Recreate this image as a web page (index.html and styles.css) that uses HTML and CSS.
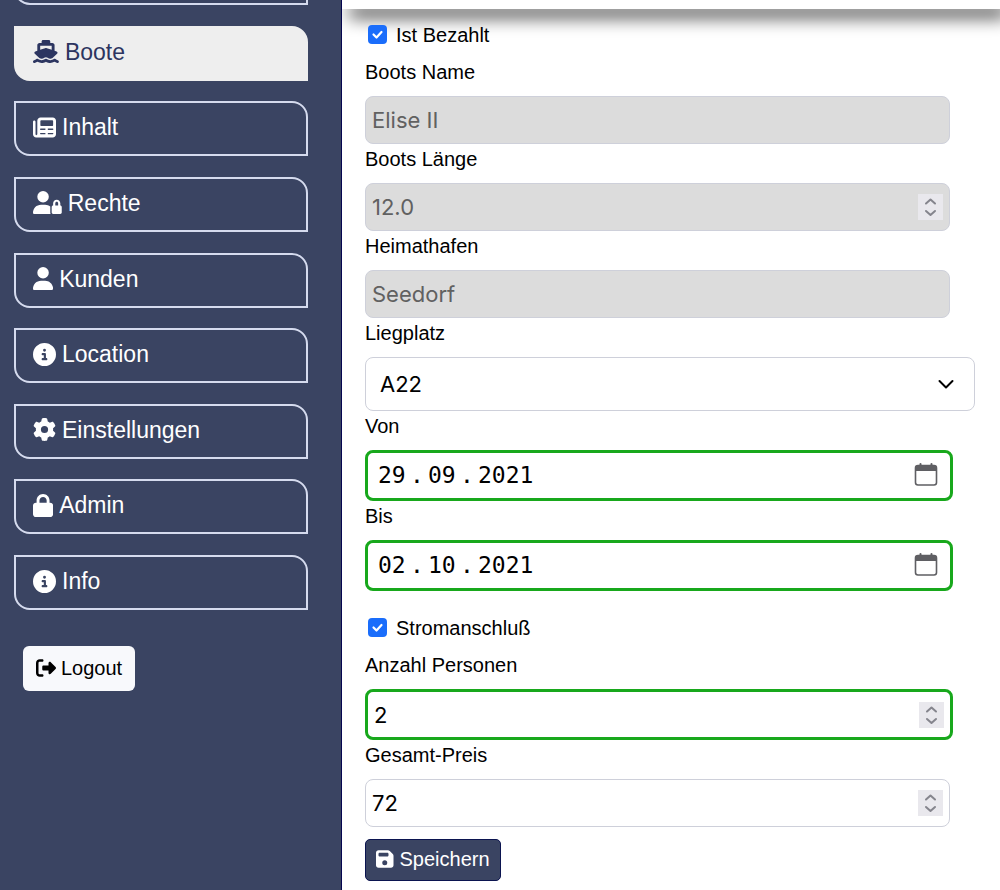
FILE: index.html
```html
<!DOCTYPE html>
<html lang="de">
<head>
<meta charset="utf-8">
<meta name="viewport" content="width=device-width, initial-scale=1">
<title>Boote</title>
<link rel="stylesheet" href="styles.css">
</head>
<body>
<svg class="sprite" aria-hidden="true">
  <symbol id="info" viewBox="0 0 512 512"><path d="M256 512A256 256 0 1 0 256 0a256 256 0 1 0 0 512zM216 336h24V272H216c-13.300 0-24-10.700-24-24s10.700-24 24-24h48c13.300 0 24 10.700 24 24v88h8c13.300 0 24 10.700 24 24s-10.700 24-24 24H216c-13.300 0-24-10.700-24-24s10.700-24 24-24zm40-208a32 32 0 1 1 0 64 32 32 0 1 1 0-64z"/></symbol>
  <symbol id="calendar" viewBox="0 0 24 24"><path d="M6.500 1v4M17.500 1v4" fill="none" stroke="currentColor" stroke-width="2" stroke-linecap="round"/><rect x="1.500" y="2.500" width="21" height="19.500" rx="2.500" fill="none" stroke="currentColor" stroke-width="1.600"/><path d="M1.500 8V5a2.500 2.500 0 0 1 2.500-2.500h16a2.500 2.500 0 0 1 2.500 2.500v3z"/></symbol>
  <symbol id="up" viewBox="0 0 25 13"><path d="M8 9.500l4.500-4L17 9.500" fill="none" stroke="currentColor" stroke-width="2" stroke-linecap="round" stroke-linejoin="round"/></symbol>
  <symbol id="down" viewBox="0 0 25 13"><path d="M8 4l4.500 4L17 4" fill="none" stroke="currentColor" stroke-width="2" stroke-linecap="round" stroke-linejoin="round"/></symbol>
</svg>
<div class="layout">
  <aside class="sidebar">
    <nav class="menu">
      <a class="menu-item" href="#start" aria-label="Start"></a>
      <a class="menu-item active" href="#boote" aria-current="page"><svg class="icon" viewBox="0 0 576 512"><path d="M192 32c0-17.700 14.300-32 32-32H352c17.700 0 32 14.300 32 32V64h48c26.500 0 48 21.500 48 48V240l44.400 14.800c23.100 7.700 29.500 37.500 11.500 53.900l-101 92.600c-16.200 9.400-34.700 15.100-50.900 15.100c-19.600 0-40.800-7.700-59.200-20.300c-22.100-15.500-51.600-15.500-73.700 0c-17.100 11.800-38 20.300-59.200 20.300c-16.200 0-34.700-5.700-50.900-15.100l-101-92.600c-18-16.500-11.600-46.200 11.500-53.900L96 240V112c0-26.500 21.500-48 48-48h48V32zM160 218.700l107.800-35.900c13.100-4.400 27.300-4.400 40.500 0L416 218.700V128H160v90.700zM306.500 421.900C329 437.400 356.500 448 384 448c26.900 0 55.400-10.800 77.400-26.100c11.900-8.500 28.100-7.800 39.200 1.700c14.400 11.900 32.500 21 50.600 25.200c17.200 4 27.900 21.200 23.900 38.400s-21.200 27.900-38.400 23.900c-24.500-5.700-44.900-16.500-58.200-25C449.500 501.700 417 512 384 512c-31.900 0-60.600-9.900-80.400-18.900c-5.800-2.700-11.100-5.300-15.600-7.700c-4.500 2.400-9.700 5.100-15.600 7.700c-19.800 9-48.500 18.900-80.400 18.900c-33 0-65.500-10.300-94.500-25.800c-13.400 8.400-33.700 19.300-58.200 25c-17.200 4-34.400-6.700-38.400-23.900s6.700-34.400 23.900-38.400c18.100-4.200 36.200-13.300 50.600-25.200c11.100-9.400 27.300-10.100 39.200-1.700C136.700 437.200 165.100 448 192 448c27.500 0 55-10.600 77.500-26.100c11.100-7.900 25.900-7.900 37 0z"/></svg>Boote</a>
      <a class="menu-item" href="#inhalt"><svg class="icon" viewBox="0 0 512 512"><path fill-rule="evenodd" d="M168 32H440c40 0 72 32 72 72V408c0 40-32 72-72 72H72c-40 0-72-32-72-72V128c0-17 12-30 28-30s28 13 28 30V408c0 11 7 18 16 18s24-7 24-24V104c0-40 32-72 72-72zM182 94c-10 0-18 8-18 18v94c0 8 6 14 14 14H434c8 0 14-6 14-14V112c0-10-8-18-18-18zM170 280c-8 0-14 6-14 14s6 16 14 16H276v-30zM330 280v30H440c8 0 14-8 14-16s-6-14-14-14zM170 378c-8 0-14 6-14 14s6 16 14 16H276v-30zM330 378v30H440c8 0 14-8 14-16s-6-14-14-14z"/></svg>Inhalt</a>
      <a class="menu-item" href="#rechte"><svg class="icon" viewBox="0 0 640 512"><path d="M224 256A128 128 0 1 0 224 0a128 128 0 1 0 0 256zm-45.700 48C79.800 304 0 383.800 0 482.300C0 498.700 13.300 512 29.700 512H392.600c-5.400-9.400-8.600-20.300-8.600-32V352c0-2.100 .1-4.200 .3-6.300c-31-26-71-41.700-114.600-41.700H178.300zM528 240c17.700 0 32 14.300 32 32v48H496V272c0-17.700 14.300-32 32-32zm-80 32v48c-17.700 0-32 14.300-32 32V480c0 17.700 14.300 32 32 32H608c17.700 0 32-14.300 32-32V352c0-17.700-14.300-32-32-32V272c0-44.200-35.800-80-80-80s-80 35.800-80 80z"/></svg>Rechte</a>
      <a class="menu-item" href="#kunden"><svg class="icon" viewBox="0 0 448 512"><path d="M224 256A128 128 0 1 0 224 0a128 128 0 1 0 0 256zm-45.700 48C79.800 304 0 383.800 0 482.300C0 498.700 13.300 512 29.700 512H418.300c16.400 0 29.700-13.300 29.700-29.700C448 383.800 368.200 304 269.700 304H178.300z"/></svg>Kunden</a>
      <a class="menu-item" href="#location"><svg class="icon" viewBox="0 0 512 512"><use href="#info"/></svg>Location</a>
      <a class="menu-item" href="#einstellungen"><svg class="icon" viewBox="0 0 512 512"><path d="M495.900 166.600c3.200 8.700 .5 18.400-6.400 24.600l-43.300 39.400c1.100 8.300 1.700 16.800 1.700 25.400s-.6 17.100-1.700 25.400l43.300 39.400c6.900 6.200 9.600 15.900 6.400 24.600c-4.400 11.900-9.700 23.300-15.800 34.300l-4.700 8.100c-6.600 11-14 21.400-22.100 31.200c-5.900 7.200-15.700 9.600-24.500 6.800l-55.700-17.700c-13.400 10.300-28.200 18.900-44 25.400l-12.500 57.100c-2 9.100-9 16.300-18.200 17.800c-13.800 2.300-28 3.500-42.500 3.500s-28.700-1.200-42.500-3.500c-9.200-1.500-16.200-8.700-18.200-17.800l-12.500-57.100c-15.800-6.500-30.600-15.100-44-25.400L83.100 425.900c-8.800 2.800-18.600 .3-24.500-6.800c-8.100-9.800-15.500-20.200-22.100-31.200l-4.700-8.100c-6.100-11-11.400-22.400-15.800-34.300c-3.200-8.700-.5-18.400 6.400-24.600l43.300-39.400C64.600 273.100 64 264.600 64 256s.6-17.100 1.700-25.400L22.400 191.200c-6.900-6.200-9.600-15.900-6.400-24.600c4.400-11.900 9.700-23.300 15.800-34.300l4.700-8.100c6.600-11 14-21.400 22.100-31.200c5.900-7.200 15.700-9.600 24.500-6.800l55.700 17.700c13.400-10.300 28.200-18.900 44-25.400l12.500-57.100c2-9.100 9-16.300 18.200-17.800C227.300 1.200 241.500 0 256 0s28.700 1.200 42.500 3.500c9.200 1.500 16.200 8.700 18.200 17.800l12.500 57.100c15.800 6.500 30.600 15.100 44 25.400l55.700-17.700c8.800-2.800 18.600-.3 24.500 6.800c8.100 9.800 15.500 20.200 22.100 31.200l4.700 8.100c6.100 11 11.400 22.400 15.800 34.300zM256 336a80 80 0 1 0 0-160 80 80 0 1 0 0 160z"/></svg>Einstellungen</a>
      <a class="menu-item" href="#admin"><svg class="icon" viewBox="0 0 448 512"><path d="M144 144v48H304V144c0-44.200-35.800-80-80-80s-80 35.800-80 80zM80 192V144C80 64.500 144.500 0 224 0s144 64.500 144 144v48h16c35.300 0 64 28.700 64 64V448c0 35.300-28.700 64-64 64H64c-35.300 0-64-28.700-64-64V256c0-35.300 28.700-64 64-64H80z"/></svg>Admin</a>
      <a class="menu-item" href="#info-seite"><svg class="icon" viewBox="0 0 512 512"><use href="#info"/></svg>Info</a>
    </nav>
    <button class="logout" type="button"><svg class="icon" viewBox="0 0 512 512"><path d="M377.900 105.900L500.700 228.700c7.200 7.200 11.300 17.100 11.300 27.300s-4.100 20.100-11.300 27.300L377.900 406.100c-6.400 6.400-15 9.900-24 9.900c-18.700 0-33.900-15.200-33.900-33.900v-62.100H192c-17.700 0-32-14.300-32-32v-64c0-17.700 14.300-32 32-32h128v-62.100c0-18.700 15.200-33.900 33.900-33.900c9 0 17.600 3.600 24 9.900zM160 96H96c-17.700 0-32 14.300-32 32v256c0 17.700 14.300 32 32 32h64c17.700 0 32 14.300 32 32s-14.300 32-32 32H96c-53 0-96-43-96-96V128C0 75 43 32 96 32h64c17.700 0 32 14.300 32 32s-14.300 32-32 32z"/></svg>Logout</button>
  </aside>
  <main class="content">
    <header class="topbar"></header>
    <form class="form">
      <div class="check-row">
        <input class="check" type="checkbox" id="bezahlt" checked>
        <label for="bezahlt">Ist Bezahlt</label>
      </div>
      <label class="label" for="name">Boots Name</label>
      <div class="field disabled"><input class="value" id="name" type="text" value="Elise II" disabled></div>
      <label class="label" for="laenge">Boots Länge</label>
      <div class="field disabled">
        <input class="value" id="laenge" type="number" step="0.1" value="12.0" disabled>
        <span class="stepper"><button type="button" aria-label="Mehr" disabled><svg><use href="#up"/></svg></button><button type="button" aria-label="Weniger" disabled><svg><use href="#down"/></svg></button></span>
      </div>
      <label class="label" for="hafen">Heimathafen</label>
      <div class="field disabled"><input class="value" id="hafen" type="text" value="Seedorf" disabled></div>
      <label class="label" for="platz">Liegplatz</label>
      <div class="select-wrap">
        <select class="select" id="platz"><option>A22</option></select>
        <svg class="chevron" viewBox="0 0 16 16"><path d="M1.500 5l6.500 6.500L14.500 5" fill="none" stroke="currentColor" stroke-width="2" stroke-linecap="round" stroke-linejoin="round"/></svg>
      </div>
      <label class="label" for="von">Von</label>
      <div class="field valid date">
        <input class="part" id="von" aria-label="Von Tag" value="29"><span class="dot">.</span><input class="part" aria-label="Von Monat" value="09"><span class="dot">.</span><input class="part year" aria-label="Von Jahr" value="2021">
        <button class="picker" type="button" aria-label="Kalender"><svg><use href="#calendar"/></svg></button>
      </div>
      <label class="label" for="bis">Bis</label>
      <div class="field valid date">
        <input class="part" id="bis" aria-label="Bis Tag" value="02"><span class="dot">.</span><input class="part" aria-label="Bis Monat" value="10"><span class="dot">.</span><input class="part year" aria-label="Bis Jahr" value="2021">
        <button class="picker" type="button" aria-label="Kalender"><svg><use href="#calendar"/></svg></button>
      </div>
      <div class="check-row spaced">
        <input class="check" type="checkbox" id="strom" checked>
        <label for="strom">Stromanschluß</label>
      </div>
      <label class="label" for="personen">Anzahl Personen</label>
      <div class="field valid">
        <input class="value" id="personen" type="number" value="2">
        <span class="stepper"><button type="button" aria-label="Mehr"><svg><use href="#up"/></svg></button><button type="button" aria-label="Weniger"><svg><use href="#down"/></svg></button></span>
      </div>
      <label class="label" for="preis">Gesamt-Preis</label>
      <div class="field">
        <input class="value" id="preis" type="number" value="72">
        <span class="stepper"><button type="button" aria-label="Mehr"><svg><use href="#up"/></svg></button><button type="button" aria-label="Weniger"><svg><use href="#down"/></svg></button></span>
      </div>
      <button class="save" type="submit"><svg class="icon" viewBox="0 0 448 512"><path fill-rule="evenodd" d="M64 32C28.700 32 0 60.700 0 96V416c0 35.300 28.700 64 64 64H384c35.300 0 64-28.700 64-64V173.300c0-17-6.700-33.300-18.700-45.300L352 50.700C340 38.700 323.700 32 306.700 32H64zM96 96H288c17.700 0 32 14.300 32 32v32c0 17.700-14.300 32-32 32H96c-17.700 0-32-14.300-32-32v-32c0-17.700 14.300-32 32-32zM224 288a64 64 0 1 1 0 128 64 64 0 1 1 0-128z"/></svg>Speichern</button>
    </form>
  </main>
</div>
</body>
</html>
```
FILE: styles.css
```css
* { box-sizing: border-box; }

body {
  margin: 0;
  background: #fff;
  color: #000;
  font-family: "Liberation Sans", Arial, sans-serif;
  font-size: 20px;
  line-height: 30px;
}

button, input, select { font: inherit; color: inherit; }
svg { fill: currentColor; }
.sprite { display: none; }

.layout {
  display: grid;
  grid-template-columns: 342px 1fr;
  min-height: 100vh;
  overflow: hidden;
}

/* Sidebar */
.sidebar {
  padding: 0 33px 0 14px;
  background: #3a4462;
  border-right: 1px solid #060650;
}

.menu {
  display: flex;
  flex-direction: column;
  justify-content: space-between;
  min-height: 660px;
  margin-top: -50px;
}

.menu-item {
  display: flex;
  align-items: center;
  gap: 6px;
  height: 55px;
  padding: 0 17px 3px;
  border: 2px solid #d5dbee;
  border-radius: 0 16px 0 16px;
  color: #fff;
  font-size: 23px;
  text-decoration: none;
}

.menu-item.active {
  background: #eee;
  border-color: #eee;
  color: #2c3560;
}

.icon { height: 23px; flex: none; }

.logout {
  display: flex;
  align-items: center;
  gap: 5px;
  height: 45px;
  margin: 36px 0 0 9px;
  padding: 0 13px 2px;
  border: 0;
  border-radius: 6px;
  background: #f8f9fc;
  color: #000;
}

.logout .icon, .save .icon { height: 20px; }

/* Content */
.content { min-width: 0; overflow: hidden; }

.topbar {
  height: 9px;
  background: #fff;
  box-shadow: 7px 7px 18px #000;
}

.form { padding: 11px 25px 9px 23px; }

.check-row {
  display: flex;
  align-items: center;
  gap: 9px;
  height: 37px;
  padding: 0 0 7px 3px;
}

.check-row.spaced { margin-top: 22px; }

.check {
  appearance: none;
  width: 19px;
  height: 19px;
  margin: 0 0 2px;
  border-radius: 4px;
  background: #1a6dfb url("data:image/svg+xml,%3Csvg xmlns='http://www.w3.org/2000/svg' viewBox='0 0 19 19'%3E%3Cpath d='M5.500 9.500l3 3 5-5.500' fill='none' stroke='white' stroke-width='2.200' stroke-linecap='round' stroke-linejoin='round'/%3E%3C/svg%3E") center / contain;
}

.label { display: block; margin-bottom: 9px; }

.field {
  display: flex;
  align-items: center;
  width: calc(100% - 25px);
  height: 48px;
  padding: 0 6px;
  border: 1px solid #ced0da;
  border-radius: 8px;
  background: #fff;
}

.field.disabled { background: #dcdcdc; color: #616161; }

.field.valid {
  width: calc(100% - 22px);
  height: 51px;
  border: 3px solid #18a81c;
}

.value {
  flex: 1;
  min-width: 0;
  padding: 0;
  border: 0;
  background: none;
  outline: 0;
  font-family: Inter, sans-serif;
  font-size: 22px;
  appearance: textfield;
}

.value::-webkit-inner-spin-button { appearance: none; }

.stepper {
  display: flex;
  flex-direction: column;
  background: #e9e8ed;
  color: #85858d;
}

.stepper button {
  display: flex;
  padding: 0;
  border: 0;
  background: none;
  color: inherit;
}

.stepper svg { width: 25px; height: 13px; }

.select-wrap { display: grid; align-items: center; }
.select-wrap > * { grid-area: 1 / 1; }

.select {
  appearance: none;
  width: 100%;
  height: 54px;
  padding: 0 14px;
  border: 1px solid #ced0da;
  border-radius: 8px;
  background: #fff;
  font-family: Inter, sans-serif;
  font-size: 22px;
}

.chevron {
  justify-self: end;
  width: 16px;
  height: 16px;
  margin-right: 21px;
  pointer-events: none;
}

.date {
  padding: 0 12px 2px 10px;
  font-family: "DejaVu Sans Mono", monospace;
  font-size: 23px;
}

.part {
  width: 28px;
  padding: 0;
  border: 0;
  background: none;
  outline: 0;
}

.part.year { width: 56px; }
.dot { width: 22px; text-align: center; }

.picker {
  display: flex;
  margin-left: auto;
  padding: 0;
  border: 0;
  background: none;
  color: #5f5f63;
}

.picker svg { width: 24px; height: 24px; }

.save {
  display: flex;
  align-items: center;
  gap: 6px;
  height: 42px;
  margin-top: 12px;
  padding: 0 10px 3px;
  border: 1px solid #0b1450;
  border-radius: 5px;
  background: #3a4462;
  color: #fff;
}
```
